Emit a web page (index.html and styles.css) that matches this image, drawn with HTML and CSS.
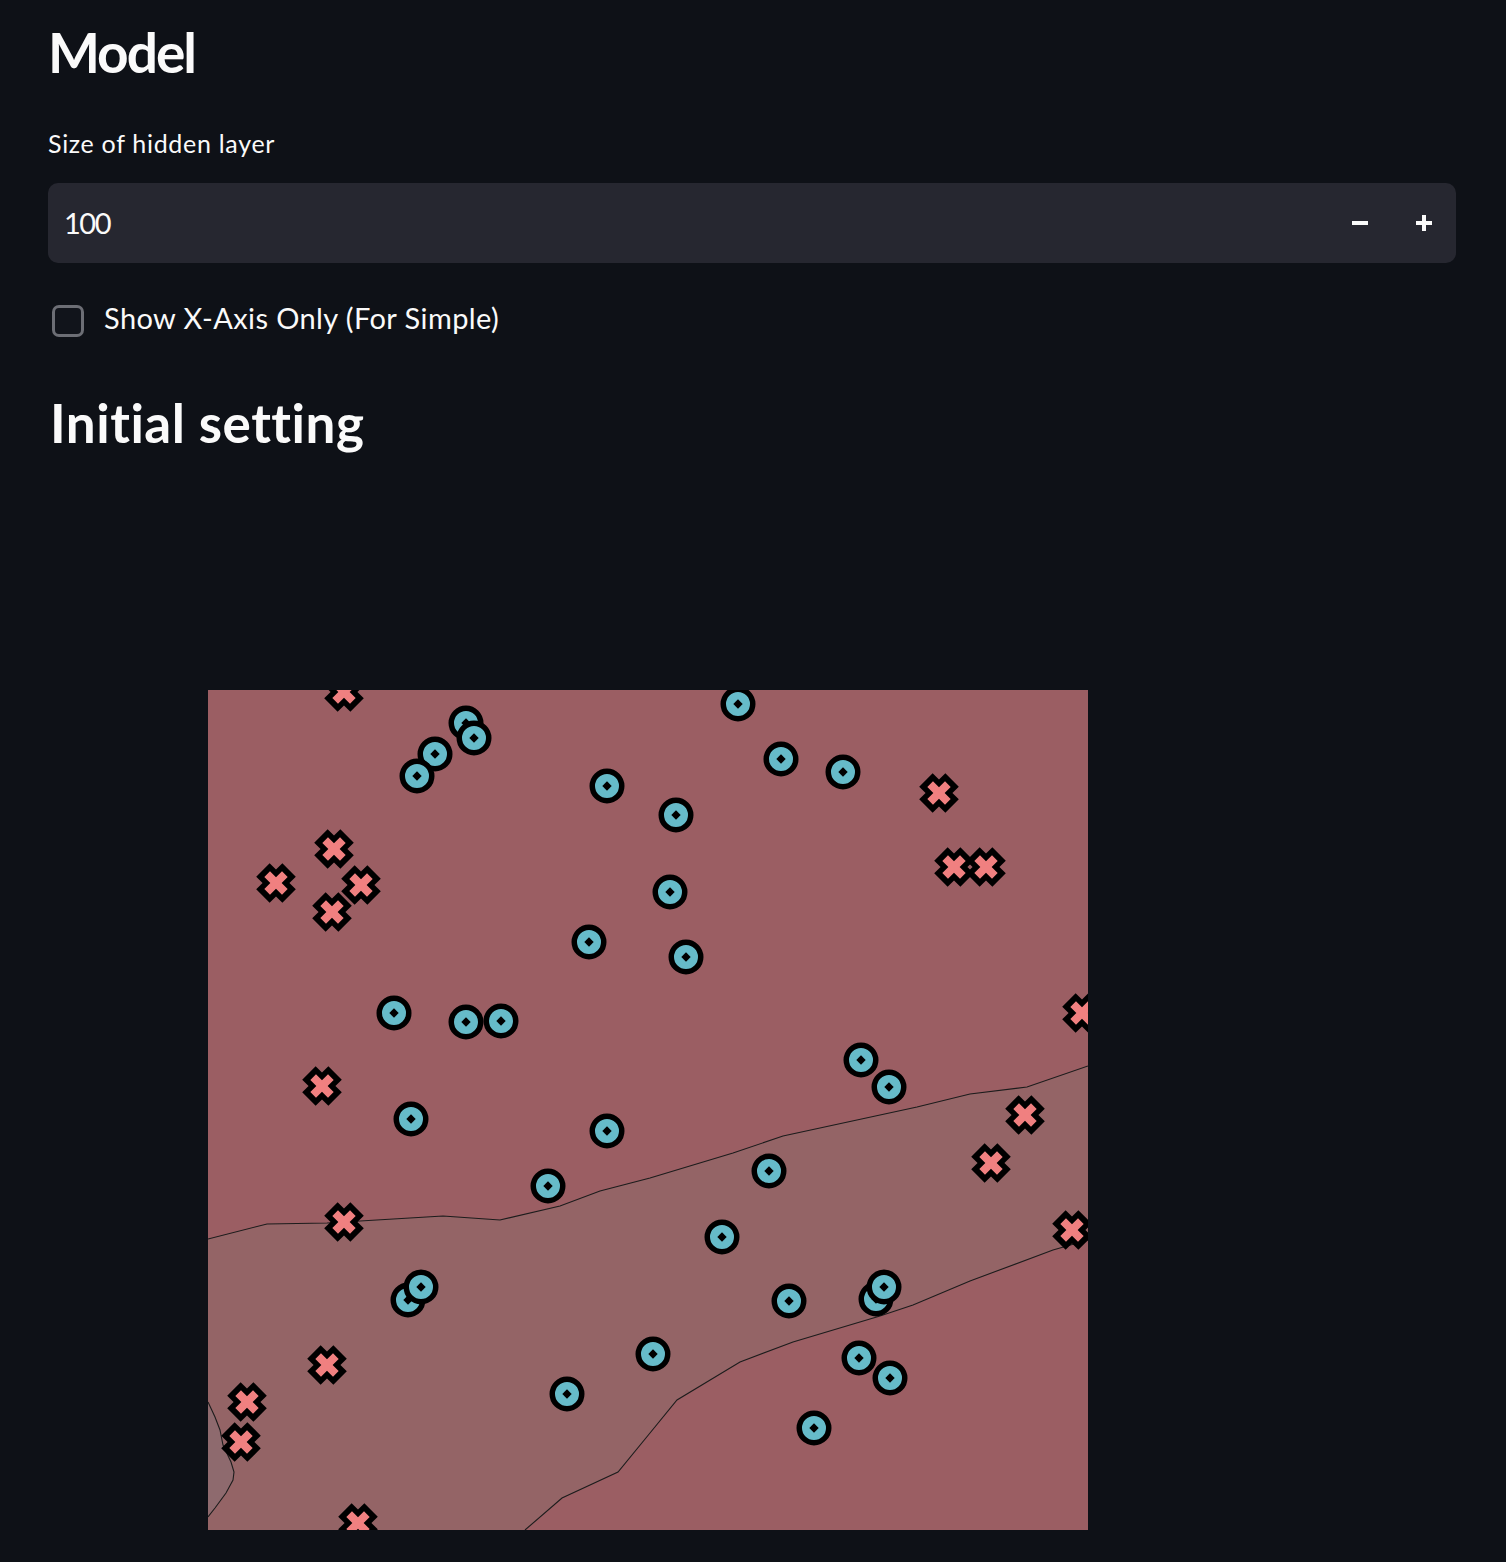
FILE: index.html
```html
<!DOCTYPE html>
<html>
<head>
<meta charset="utf-8">
<link rel="stylesheet" href="styles.css">
</head>
<body>
<div class="main">
  <h2 class="title">Model</h2>
  <div class="label">Size of hidden layer</div>
  <div class="number-input">
    <div class="value">100</div>
    <div class="step"><svg width="16" height="16" viewBox="0 0 16 16"><rect x="0" y="6" width="16" height="4" fill="#fafafa"/></svg></div>
    <div class="step"><svg width="16" height="16" viewBox="0 0 16 16"><rect x="0" y="6" width="16" height="4" fill="#fafafa"/><rect x="6" y="0" width="4" height="16" fill="#fafafa"/></svg></div>
  </div>
  <div class="check">
    <span class="box"></span>
    <span class="check-label">Show X-Axis Only (For Simple)</span>
  </div>
  <h2 class="title second">Initial setting</h2>
  <div class="figure">
    <svg class="plot" width="880" height="840" viewBox="208 690 880 840">
      <defs>
        <g id="o">
          <circle r="14.75" fill="#66bbc9" stroke="#000" stroke-width="5.5"/>
          <polygon points="0,-4.7 4.7,0 0,4.7 -4.7,0" fill="#000"/>
        </g>
        <g id="x" transform="rotate(45)">
          <polygon points="-9.5,-18.5 9.5,-18.5 9.5,-9.5 18.5,-9.5 18.5,9.5 9.5,9.5 9.5,18.5 -9.5,18.5 -9.5,9.5 -18.5,9.5 -18.5,-9.5 -9.5,-9.5" fill="#000"/>
          <polygon points="-4,-12.5 4,-12.5 4,-4 12.5,-4 12.5,4 4,4 4,12.5 -4,12.5 -4,4 -12.5,4 -12.5,-4 -4,-4" fill="#f08080"/>
        </g>
      </defs>
      <rect x="208" y="690" width="880" height="840" fill="#9b5e63"/>
      <polygon fill="#946466" points="208,1239 267,1224 327,1223 443,1216 500,1220 560,1206 600,1191 650,1178 733,1153 783,1136 917,1107 970,1094 1027,1087 1088,1066 1088,1240 1053,1250 970,1281 913,1305 880,1316 793,1342 740,1362 677,1400 650,1433 618,1472 562,1498 525,1530 208,1530"/>
      <polygon fill="#8e6a6e" points="208,1402 215,1417 220,1430 223,1445 231,1462 234,1472 233,1480 226,1493 215,1508 208,1517"/>
      <g fill="none" stroke="#1c1c1c" stroke-width="1.1">
        <polyline points="208,1239 267,1224 327,1223 443,1216 500,1220 560,1206 600,1191 650,1178 733,1153 783,1136 917,1107 970,1094 1027,1087 1088,1066"/>
        <polyline points="1088,1240 1053,1250 970,1281 913,1305 880,1316 793,1342 740,1362 677,1400 650,1433 618,1472 562,1498 525,1530"/>
        <polyline points="208,1402 215,1417 220,1430 223,1445 231,1462 234,1472 233,1480 226,1493 215,1508 208,1517"/>
      </g>
      <use href="#x" x="344" y="692"/>
      <use href="#x" x="334" y="849"/>
      <use href="#x" x="276" y="883"/>
      <use href="#x" x="332" y="912"/>
      <use href="#x" x="361" y="885"/>
      <use href="#x" x="939" y="793"/>
      <use href="#x" x="954" y="867"/>
      <use href="#x" x="986" y="867"/>
      <use href="#x" x="1082" y="1013"/>
      <use href="#x" x="322" y="1086"/>
      <use href="#x" x="1025" y="1115"/>
      <use href="#x" x="991" y="1163"/>
      <use href="#x" x="344" y="1222"/>
      <use href="#x" x="1072" y="1230"/>
      <use href="#x" x="327" y="1365"/>
      <use href="#x" x="247" y="1402"/>
      <use href="#x" x="241" y="1442"/>
      <use href="#x" x="358" y="1523"/>
      <use href="#o" x="738" y="704"/>
      <use href="#o" x="466" y="723"/>
      <use href="#o" x="474" y="738"/>
      <use href="#o" x="435" y="754"/>
      <use href="#o" x="417" y="776"/>
      <use href="#o" x="781" y="759"/>
      <use href="#o" x="843" y="772"/>
      <use href="#o" x="607" y="786"/>
      <use href="#o" x="676" y="815"/>
      <use href="#o" x="670" y="892"/>
      <use href="#o" x="589" y="942"/>
      <use href="#o" x="686" y="957"/>
      <use href="#o" x="394" y="1013"/>
      <use href="#o" x="466" y="1022"/>
      <use href="#o" x="501" y="1021"/>
      <use href="#o" x="861" y="1060"/>
      <use href="#o" x="889" y="1087"/>
      <use href="#o" x="411" y="1119"/>
      <use href="#o" x="607" y="1131"/>
      <use href="#o" x="769" y="1171"/>
      <use href="#o" x="548" y="1186"/>
      <use href="#o" x="722" y="1237"/>
      <use href="#o" x="408" y="1300"/>
      <use href="#o" x="421" y="1287"/>
      <use href="#o" x="789" y="1301"/>
      <use href="#o" x="876" y="1299"/>
      <use href="#o" x="884" y="1287"/>
      <use href="#o" x="653" y="1354"/>
      <use href="#o" x="859" y="1358"/>
      <use href="#o" x="890" y="1378"/>
      <use href="#o" x="567" y="1394"/>
      <use href="#o" x="814" y="1428"/>
    </svg>
  </div>
</div>
</body>
</html>
```

FILE: styles.css
```css
html, body {
  margin: 0;
  padding: 0;
  background: #0e1117;
}

body {
  color: #fafafa;
  font-family: Lato, "Noto Sans", sans-serif;
  min-height: 1562px;
}

.main {
  padding: 19px 50px 0 48px;
}

.title {
  margin: 0;
  font-weight: 700;
  font-size: 55px;
  line-height: 66px;
  letter-spacing: -2px;
}

.title.second {
  margin-top: 54px;
  margin-left: 2px;
  font-size: 53px;
  line-height: 64px;
  letter-spacing: 0.5px;
}

.label {
  margin-top: 43px;
  font-size: 25px;
  line-height: 30px;
  letter-spacing: 0.7px;
}

.number-input {
  margin-top: 25px;
  height: 80px;
  background: #262730;
  border-radius: 10px;
  display: flex;
  align-items: center;
  padding-left: 16px;
}

.number-input .value {
  flex: 1;
  font-size: 29px;
  line-height: 36px;
  letter-spacing: -1.5px;
}

.step {
  width: 64px;
  height: 80px;
  display: flex;
  align-items: center;
  justify-content: center;
}

.step svg {
  display: block;
}

.check {
  margin-top: 37px;
  display: flex;
  align-items: flex-start;
}

.box {
  box-sizing: border-box;
  width: 32px;
  height: 32px;
  margin-top: 5px;
  margin-left: 4px;
  border: 3.5px solid #6c6e75;
  border-radius: 7px;
  background: #11141b;
}

.check-label {
  margin-left: 20px;
  font-size: 29px;
  line-height: 36px;
  letter-spacing: 0.4px;
}

.figure {
  margin-top: 235px;
  padding-left: 160px;
  line-height: 0;
}

.plot {
  display: block;
}
```
